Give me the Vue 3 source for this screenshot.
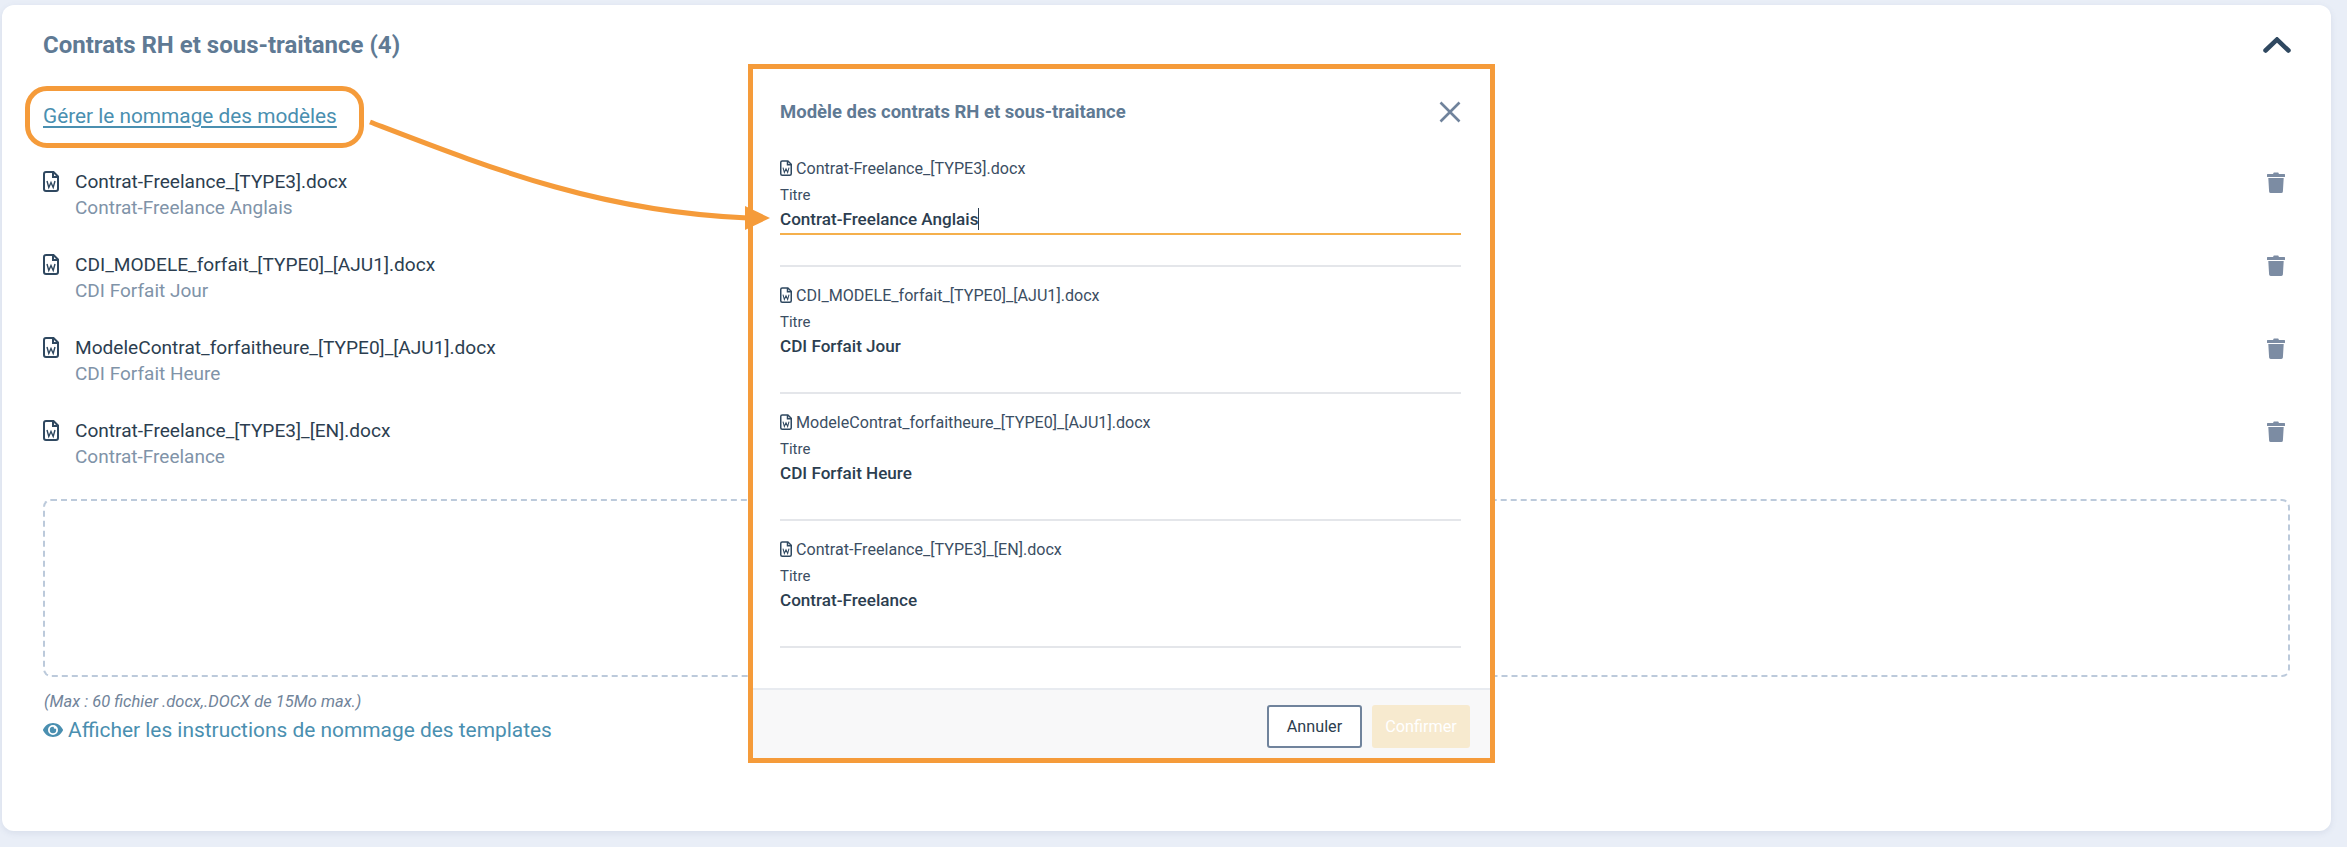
<script setup>
const templates = [
  { file: 'Contrat-Freelance_[TYPE3].docx', title: 'Contrat-Freelance Anglais' },
  { file: 'CDI_MODELE_forfait_[TYPE0]_[AJU1].docx', title: 'CDI Forfait Jour' },
  { file: 'ModeleContrat_forfaitheure_[TYPE0]_[AJU1].docx', title: 'CDI Forfait Heure' },
  { file: 'Contrat-Freelance_[TYPE3]_[EN].docx', title: 'Contrat-Freelance' },
];
</script>

<template>
  <div class="page">
    <section class="card">
      <header class="card-head">
        <h2>Contrats RH et sous-traitance (4)</h2>
        <svg class="chevron" viewBox="0 0 28 16"><path d="M2.5 13.5 14 2.5l11.5 11" /></svg>
      </header>

      <div class="manage"><a class="link-underline">Gérer le nommage des modèles</a></div>

      <ul class="files">
        <li v-for="item in templates" :key="item.file" class="file-row">
          <svg class="doc" viewBox="0 0 16 21">
            <path class="doc-line" d="M1 3a2 2 0 0 1 2-2h7.500L15 5.500V18a2 2 0 0 1-2 2H3a2 2 0 0 1-2-2z" />
            <path class="doc-line" d="M10 1.200V6h4.800" />
            <path class="doc-w" d="M4 10l1.800 6.500 2.200-5 2.200 5L12 10" />
          </svg>
          <div class="file-text">
            <div class="file-name">{{ item.file }}</div>
            <div class="file-title">{{ item.title }}</div>
          </div>
          <svg class="trash" viewBox="0 0 18 21">
            <path d="M6 2 6.800.4h4.400L12 2h5.400a.6.6 0 0 1 .6.6v1.800a.6.6 0 0 1-.6.6H.6A.6.6 0 0 1 0 4.400V2.600A.6.6 0 0 1 .6 2zM1.300 6h15.400l-.8 13.500a1.600 1.600 0 0 1-1.600 1.500H3.700a1.600 1.600 0 0 1-1.600-1.500z" />
          </svg>
        </li>
      </ul>

      <div class="dropzone"></div>
      <p class="limit">(Max : 60 fichier .docx,.DOCX de 15Mo max.)</p>
      <a class="instructions">
        <svg class="eye" viewBox="0 0 20 14">
          <path d="M10 0C5.600 0 1.900 2.800.100 6.500a1 1 0 0 0 0 1C1.900 11.200 5.600 14 10 14s8.100-2.800 9.900-6.500a1 1 0 0 0 0-1C18.100 2.800 14.400 0 10 0zm0 12a5 5 0 1 1 0-10 5 5 0 0 1 0 10zm0-8.200a3.200 3.200 0 1 0 3.200 3.200c0-.5-.1-.9-.3-1.300a1.500 1.500 0 0 1-2.100-1.600 3 3 0 0 0-.8-.3z" />
        </svg>
        Afficher les instructions de nommage des templates
      </a>
    </section>

    <div class="modal">
      <div class="modal-head">
        <h3>Modèle des contrats RH et sous-traitance</h3>
        <svg class="close" viewBox="0 0 22 22"><path d="M1.500 1.500l19 19M20.500 1.500l-19 19" /></svg>
      </div>
      <div class="modal-body">
        <div v-for="(item, i) in templates" :key="item.file" class="edit-item">
          <div class="edit-file">
            <svg class="doc small" viewBox="0 0 16 21">
              <path class="doc-line" d="M1 3a2 2 0 0 1 2-2h7.500L15 5.500V18a2 2 0 0 1-2 2H3a2 2 0 0 1-2-2z" />
              <path class="doc-line" d="M10 1.200V6h4.800" />
              <path class="doc-w" d="M4 10l1.800 6.500 2.200-5 2.200 5L12 10" />
            </svg>
            {{ item.file }}
          </div>
          <div class="edit-label">Titre</div>
          <div class="edit-input" :class="{ active: i === 0 }">{{ item.title }}<span v-if="i === 0" class="caret"></span></div>
          <div class="edit-sep"></div>
        </div>
      </div>
      <div class="modal-foot">
        <button class="btn-cancel">Annuler</button>
        <button class="btn-confirm">Confirmer</button>
      </div>
    </div>

    <!-- annotations over the page -->
    <div class="highlight"></div>
    <svg class="arrow" viewBox="0 0 420 120" width="420" height="120">
      <path class="arrow-line" d="M0 2C120 48 230 92 378 98" />
      <path class="arrow-head" d="M375 86 400 98 375 110z" />
    </svg>
  </div>
</template>

<style scoped>
.page {
  position: relative;
  box-sizing: border-box;
  height: 847px;
  padding: 5px 16px 16px 2px;
  background: #e9eef7;
  font-family: Roboto, "Liberation Sans", sans-serif;
  color: #2c3e50;
  overflow: hidden;
}

.card {
  box-sizing: border-box;
  height: 826px;
  padding: 24px 41px 0;
  background: #fff;
  border-radius: 12px;
  box-shadow: 0 2px 6px rgba(90, 110, 150, 0.12);
}

.card-head {
  display: flex;
  justify-content: space-between;
  align-items: center;
  height: 32px;
}

.card-head h2 {
  margin: 0;
  font-size: 24px;
  font-weight: 700;
  color: #5f7a94;
}

.chevron {
  width: 28px;
  height: 16px;
  margin-right: -1px;
  fill: none;
  stroke: #2f4860;
  stroke-width: 4.5;
  stroke-linecap: round;
  stroke-linejoin: miter;
}

.manage {
  margin-top: 42px;
  line-height: 26px;
  font-size: 20.8px;
}

.link-underline {
  color: #4a8fb0;
  text-decoration: underline;
  text-underline-offset: 3px;
}

.files {
  list-style: none;
  margin: 40px 0 0;
  padding: 0;
}

.file-row {
  display: flex;
  align-items: flex-start;
  height: 52px;
  margin-bottom: 31px;
}

.file-row:last-child {
  margin-bottom: 29px;
}

.doc {
  flex: none;
  width: 16px;
  height: 21px;
  margin: 2px 16px 0 0;
  fill: none;
}

.doc-line {
  stroke: #2f4860;
  stroke-width: 2;
  fill: none;
}

.doc-w {
  stroke: #2f4860;
  stroke-width: 1.4;
  fill: none;
}

.file-text {
  flex: 1;
}

.file-name {
  font-size: 19.1px;
  line-height: 26px;
  color: #2c3e50;
}

.file-title {
  font-size: 19px;
  line-height: 26px;
  color: #8093a8;
}

.trash {
  flex: none;
  width: 18px;
  height: 21px;
  margin: 3px 5px 0 0;
  fill: #7c8ca3;
}

.dropzone {
  box-sizing: border-box;
  height: 178px;
  border: 2px dashed #bccadb;
  border-radius: 8px;
}

.limit {
  margin: 15px 0 0 1px;
  font-size: 16.5px;
  line-height: 20px;
  font-style: italic;
  color: #71849a;
}

.instructions {
  display: flex;
  align-items: center;
  gap: 5px;
  margin-top: 5px;
  line-height: 26px;
  font-size: 20.9px;
  color: #4a8fb0;
}

.eye {
  width: 20px;
  height: 14px;
  fill: #4a8fb0;
}

.highlight {
  position: absolute;
  left: 25px;
  top: 86px;
  width: 339px;
  height: 62px;
  box-sizing: border-box;
  border: 5px solid #f59b3a;
  border-radius: 22px;
}

.arrow {
  position: absolute;
  left: 370px;
  top: 120px;
  overflow: visible;
}

.arrow-line {
  fill: none;
  stroke: #f59b3a;
  stroke-width: 5;
}

.arrow-head {
  fill: #f59b3a;
}

.modal {
  position: absolute;
  left: 748px;
  top: 64px;
  width: 747px;
  height: 699px;
  box-sizing: border-box;
  display: flex;
  flex-direction: column;
  background: #fff;
  border: 5px solid #f59b3a;
}

.modal-head {
  display: flex;
  justify-content: space-between;
  align-items: center;
  height: 24px;
  padding: 31px 29px 0 27px;
}

.modal-head h3 {
  margin: 0;
  font-size: 18.5px;
  font-weight: 700;
  color: #5f7a94;
}

.close {
  width: 22px;
  height: 22px;
  fill: none;
  stroke: #70839c;
  stroke-width: 2.600;
}

.modal-body {
  flex: 1;
  padding: 33px 29px 0 27px;
}

.edit-file {
  display: flex;
  align-items: center;
  gap: 4px;
  height: 22px;
  font-size: 16.1px;
  color: #3b4e63;
}

.doc.small {
  width: 12px;
  height: 16px;
  margin: 0;
}

.edit-label {
  margin-top: 7px;
  font-size: 15px;
  line-height: 18px;
  color: #3b4e63;
}

.edit-input {
  height: 24px;
  padding-top: 3px;
  padding-bottom: 2px;
  border-bottom: 2px solid transparent;
  box-sizing: content-box;
  font-size: 17.1px;
  font-weight: 500;
  line-height: 24px;
  color: #2c3e50;
}

.edit-input.active {
  border-bottom-color: #f5b04c;
}

.caret {
  display: inline-block;
  width: 1px;
  height: 22px;
  margin-left: 0;
  vertical-align: -5px;
  background: #2c3e50;
}

.edit-sep {
  height: 2px;
  margin: 30px 0 17px;
  background: #e4e6ea;
}

.modal-foot {
  display: flex;
  justify-content: flex-end;
  gap: 10px;
  height: 70px;
  box-sizing: border-box;
  padding: 15px 20px 0 0;
  background: #f8f8f9;
  border-top: 2px solid #e8ebf0;
}

.modal-foot button {
  height: 43px;
  border-radius: 3px;
  font-family: inherit;
  font-size: 16.2px;
  padding: 0;
}

.btn-cancel {
  width: 95px;
  background: #fff;
  border: 2px solid #70839c;
  color: #2c3e50;
}

.btn-confirm {
  width: 98px;
  background: #f7eacf;
  border: 0;
  color: #fff;
}
</style>

<style>
body {
  background: #e9eef7;
}
</style>
